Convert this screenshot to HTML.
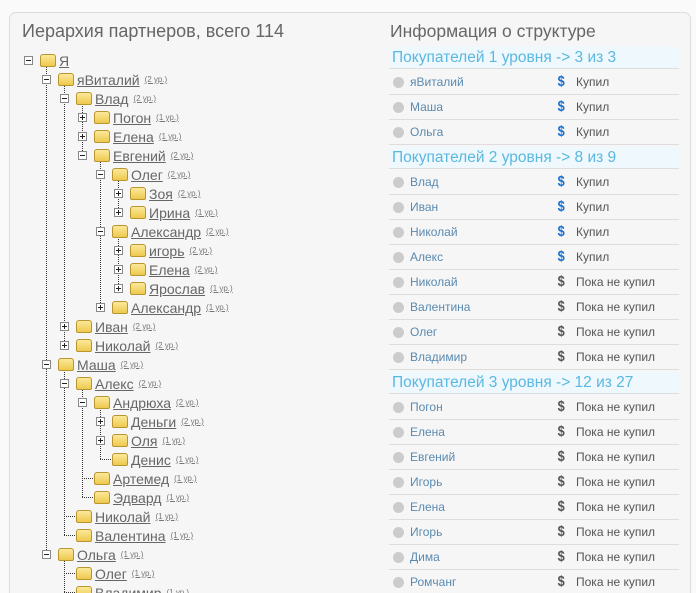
<!DOCTYPE html>
<html><head><meta charset="utf-8"><style>
html,body{margin:0;width:696px;height:593px;overflow:hidden}
body{background:#fafafa;font-family:"Liberation Sans",sans-serif;position:relative}
.panel{position:absolute;left:9px;top:12px;width:680px;height:590px;border:1px solid #ddd;border-radius:7px;background:#f6f6f6}
h1{position:absolute;margin:0;font-weight:normal;color:#666;top:21px}
.r{position:absolute;height:19px;display:flex;align-items:center;white-space:nowrap}
.b{width:7px;height:7px;border:1px solid #888;background:#fff;position:relative;margin-right:7px;flex:none}
.b:before{content:"";position:absolute;left:1px;top:3px;width:5px;height:1px;background:#222}
.p:after{content:"";position:absolute;left:3px;top:1px;width:1px;height:5px;background:#222}
.lf{width:11px;margin-left:4px;margin-right:1px;border-top:1px dotted #333;flex:none}
.f{width:14px;height:11px;background:linear-gradient(#fbe89a,#eec94e);border:1px solid #b9952e;border-radius:3px 3px 2px 2px;margin-right:3px;flex:none}
.r a{font-size:14px;color:#666;text-decoration:underline}
.r small{font-size:8px;color:#777;margin-left:5px;text-decoration:underline}
.v{position:absolute;border-left:1px dotted #333;width:0}
.hd{position:absolute;left:389px;width:290px;height:22px;background:#eef8fd;color:#5bb8e0;font-size:15.5px;line-height:22px;padding-left:3px;box-sizing:border-box;border-bottom:1px solid #ddd}
.row{position:absolute;left:389px;width:290px;height:25px;border-bottom:1px solid #ddd;box-sizing:border-box;font-size:12px}
.row i{position:absolute;left:4px;top:7px;width:11px;height:11px;border-radius:50%;background:#ccc}
.row .nm{position:absolute;left:21px;top:5px;color:#5a8ab0}
.row .d{position:absolute;left:168px;top:3px;font-weight:bold;font-size:15px;color:#1a6fd0;transform:scaleX(.85)}
.row .d.g{color:#555}
.row .st{position:absolute;left:187px;top:5px;color:#555}
</style></head><body>
<div class="panel"></div>
<h1 style="left:22px;font-size:18px">Иерархия партнеров, всего 114</h1>
<h1 style="left:390px;font-size:17.5px">Информация о структуре</h1>

<div class="v" style="left:46px;top:60px;height:494px"></div>
<div class="v" style="left:64px;top:79px;height:266px"></div>
<div class="v" style="left:82px;top:98px;height:57px"></div>
<div class="v" style="left:100px;top:155px;height:152px"></div>
<div class="v" style="left:118px;top:174px;height:38px"></div>
<div class="v" style="left:118px;top:231px;height:57px"></div>
<div class="v" style="left:64px;top:364px;height:171px"></div>
<div class="v" style="left:82px;top:383px;height:114px"></div>
<div class="v" style="left:100px;top:402px;height:57px"></div>
<div class="v" style="left:64px;top:554px;height:40px"></div>

<div class="r" style="left:24px;top:51px"><span class="b"></span><span class="f"></span><a>Я</a></div>
<div class="r" style="left:42px;top:70px"><span class="b"></span><span class="f"></span><a>яВиталий</a><small>(2 ур.)</small></div>
<div class="r" style="left:60px;top:89px"><span class="b"></span><span class="f"></span><a>Влад</a><small>(2 ур.)</small></div>
<div class="r" style="left:78px;top:108px"><span class="b p"></span><span class="f"></span><a>Погон</a><small>(1 ур.)</small></div>
<div class="r" style="left:78px;top:127px"><span class="b p"></span><span class="f"></span><a>Елена</a><small>(1 ур.)</small></div>
<div class="r" style="left:78px;top:146px"><span class="b"></span><span class="f"></span><a>Евгений</a><small>(2 ур.)</small></div>
<div class="r" style="left:96px;top:165px"><span class="b"></span><span class="f"></span><a>Олег</a><small>(2 ур.)</small></div>
<div class="r" style="left:114px;top:184px"><span class="b p"></span><span class="f"></span><a>Зоя</a><small>(2 ур.)</small></div>
<div class="r" style="left:114px;top:203px"><span class="b p"></span><span class="f"></span><a>Ирина</a><small>(1 ур.)</small></div>
<div class="r" style="left:96px;top:222px"><span class="b"></span><span class="f"></span><a>Александр</a><small>(2 ур.)</small></div>
<div class="r" style="left:114px;top:241px"><span class="b p"></span><span class="f"></span><a>игорь</a><small>(2 ур.)</small></div>
<div class="r" style="left:114px;top:260px"><span class="b p"></span><span class="f"></span><a>Елена</a><small>(2 ур.)</small></div>
<div class="r" style="left:114px;top:279px"><span class="b p"></span><span class="f"></span><a>Ярослав</a><small>(1 ур.)</small></div>
<div class="r" style="left:96px;top:298px"><span class="b p"></span><span class="f"></span><a>Александр</a><small>(1 ур.)</small></div>
<div class="r" style="left:60px;top:317px"><span class="b p"></span><span class="f"></span><a>Иван</a><small>(2 ур.)</small></div>
<div class="r" style="left:60px;top:336px"><span class="b p"></span><span class="f"></span><a>Николай</a><small>(2 ур.)</small></div>
<div class="r" style="left:42px;top:355px"><span class="b"></span><span class="f"></span><a>Маша</a><small>(2 ур.)</small></div>
<div class="r" style="left:60px;top:374px"><span class="b"></span><span class="f"></span><a>Алекс</a><small>(2 ур.)</small></div>
<div class="r" style="left:78px;top:393px"><span class="b"></span><span class="f"></span><a>Андрюха</a><small>(2 ур.)</small></div>
<div class="r" style="left:96px;top:412px"><span class="b p"></span><span class="f"></span><a>Деньги</a><small>(2 ур.)</small></div>
<div class="r" style="left:96px;top:431px"><span class="b p"></span><span class="f"></span><a>Оля</a><small>(1 ур.)</small></div>
<div class="r" style="left:96px;top:450px"><span class="lf"></span><span class="f"></span><a>Денис</a><small>(1 ур.)</small></div>
<div class="r" style="left:78px;top:469px"><span class="lf"></span><span class="f"></span><a>Артемед</a><small>(1 ур.)</small></div>
<div class="r" style="left:78px;top:488px"><span class="lf"></span><span class="f"></span><a>Эдвард</a><small>(1 ур.)</small></div>
<div class="r" style="left:60px;top:507px"><span class="lf"></span><span class="f"></span><a>Николай</a><small>(1 ур.)</small></div>
<div class="r" style="left:60px;top:526px"><span class="lf"></span><span class="f"></span><a>Валентина</a><small>(1 ур.)</small></div>
<div class="r" style="left:42px;top:545px"><span class="b"></span><span class="f"></span><a>Ольга</a><small>(1 ур.)</small></div>
<div class="r" style="left:60px;top:564px"><span class="lf"></span><span class="f"></span><a>Олег</a><small>(1 ур.)</small></div>
<div class="r" style="left:60px;top:583px"><span class="lf"></span><span class="f"></span><a>Владимир</a><small>(1 ур.)</small></div>

<div class="hd" style="top:47px">Покупателей 1 уровня -&gt; 3 из 3</div>
<div class="row" style="top:70px"><i></i><span class="nm">яВиталий</span><span class="d">$</span><span class="st">Купил</span></div>
<div class="row" style="top:95px"><i></i><span class="nm">Маша</span><span class="d">$</span><span class="st">Купил</span></div>
<div class="row" style="top:120px"><i></i><span class="nm">Ольга</span><span class="d">$</span><span class="st">Купил</span></div>
<div class="hd" style="top:147px">Покупателей 2 уровня -&gt; 8 из 9</div>
<div class="row" style="top:170px"><i></i><span class="nm">Влад</span><span class="d">$</span><span class="st">Купил</span></div>
<div class="row" style="top:195px"><i></i><span class="nm">Иван</span><span class="d">$</span><span class="st">Купил</span></div>
<div class="row" style="top:220px"><i></i><span class="nm">Николай</span><span class="d">$</span><span class="st">Купил</span></div>
<div class="row" style="top:245px"><i></i><span class="nm">Алекс</span><span class="d">$</span><span class="st">Купил</span></div>
<div class="row" style="top:270px"><i></i><span class="nm">Николай</span><span class="d g">$</span><span class="st">Пока не купил</span></div>
<div class="row" style="top:295px"><i></i><span class="nm">Валентина</span><span class="d g">$</span><span class="st">Пока не купил</span></div>
<div class="row" style="top:320px"><i></i><span class="nm">Олег</span><span class="d g">$</span><span class="st">Пока не купил</span></div>
<div class="row" style="top:345px"><i></i><span class="nm">Владимир</span><span class="d g">$</span><span class="st">Пока не купил</span></div>
<div class="hd" style="top:372px">Покупателей 3 уровня -&gt; 12 из 27</div>
<div class="row" style="top:395px"><i></i><span class="nm">Погон</span><span class="d g">$</span><span class="st">Пока не купил</span></div>
<div class="row" style="top:420px"><i></i><span class="nm">Елена</span><span class="d g">$</span><span class="st">Пока не купил</span></div>
<div class="row" style="top:445px"><i></i><span class="nm">Евгений</span><span class="d g">$</span><span class="st">Пока не купил</span></div>
<div class="row" style="top:470px"><i></i><span class="nm">Игорь</span><span class="d g">$</span><span class="st">Пока не купил</span></div>
<div class="row" style="top:495px"><i></i><span class="nm">Елена</span><span class="d g">$</span><span class="st">Пока не купил</span></div>
<div class="row" style="top:520px"><i></i><span class="nm">Игорь</span><span class="d g">$</span><span class="st">Пока не купил</span></div>
<div class="row" style="top:545px"><i></i><span class="nm">Дима</span><span class="d g">$</span><span class="st">Пока не купил</span></div>
<div class="row" style="top:570px"><i></i><span class="nm">Ромчанг</span><span class="d g">$</span><span class="st">Пока не купил</span></div>
</body></html>
